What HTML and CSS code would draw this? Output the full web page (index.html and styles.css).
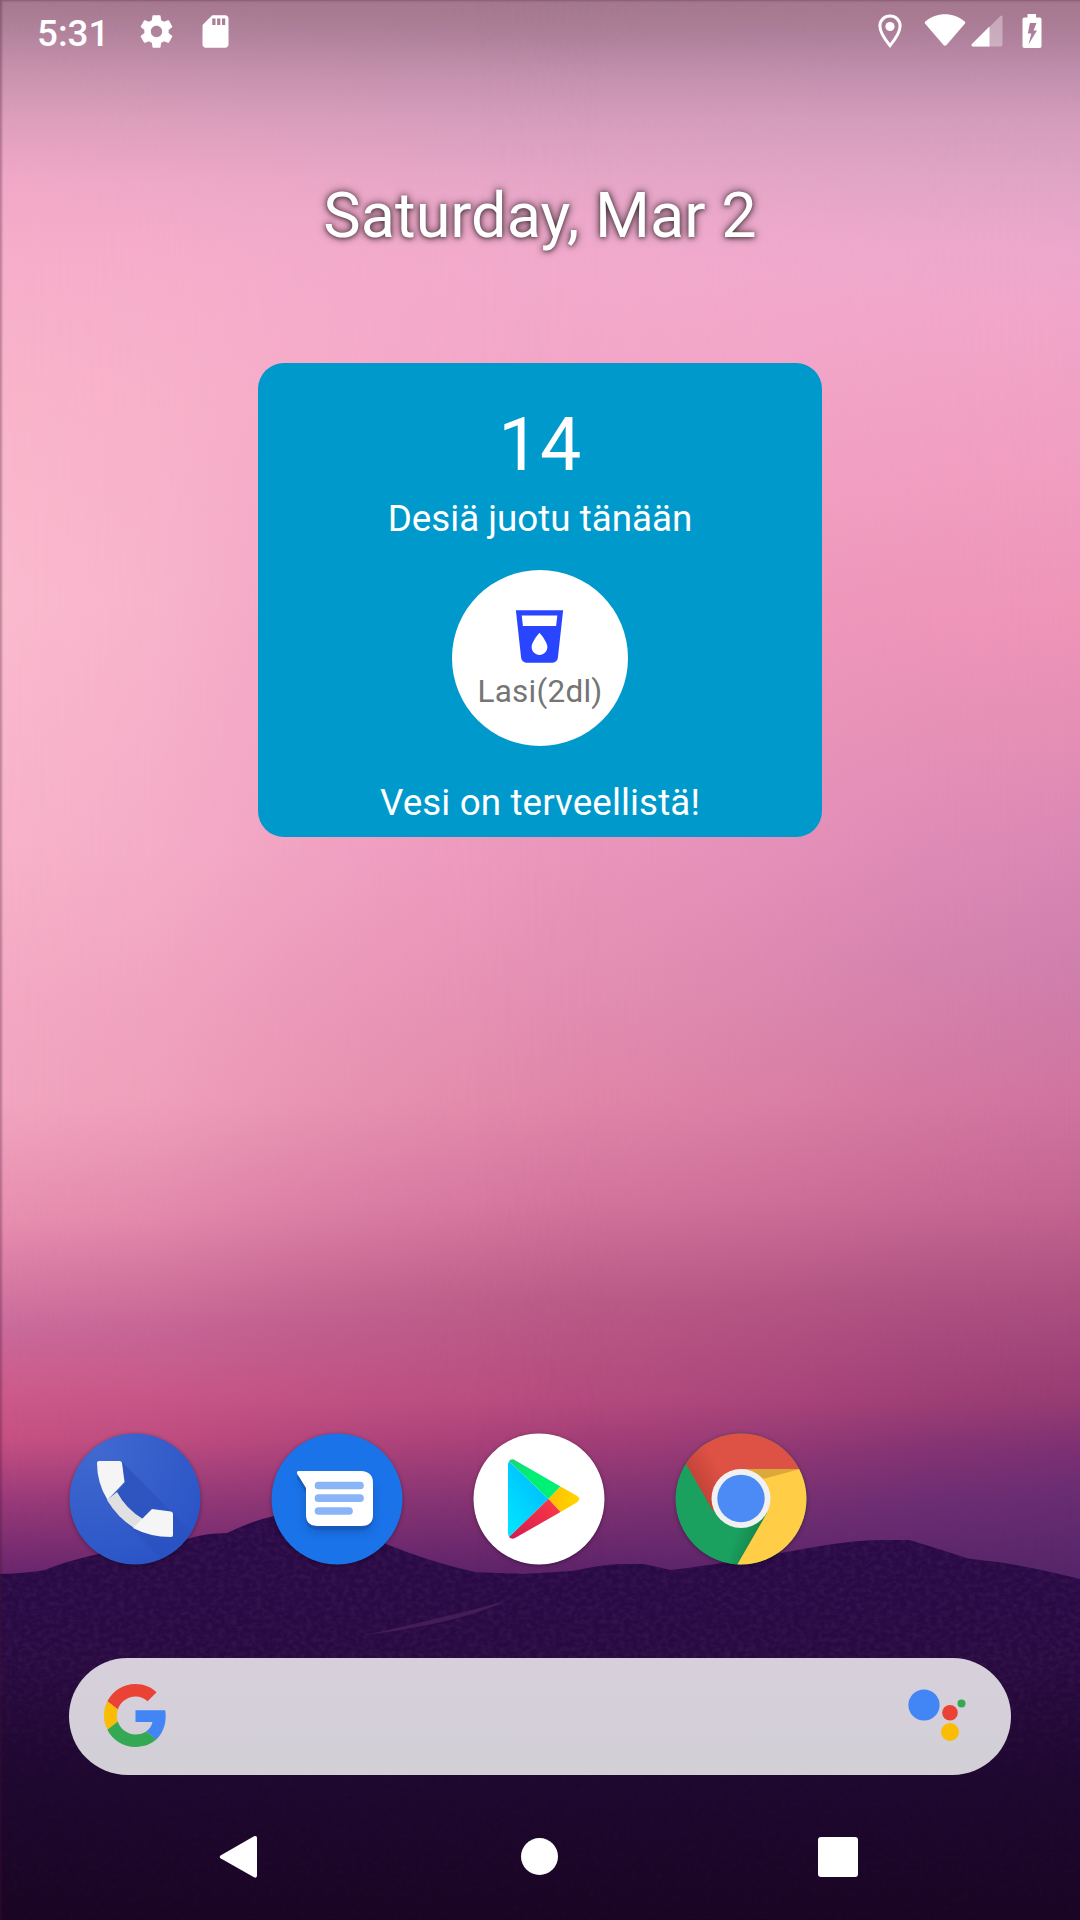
FILE: index.html
```html
<!DOCTYPE html>
<html lang="fi">
<head>
<meta charset="utf-8">
<title>Home screen</title>
<link rel="stylesheet" href="styles.css">
</head>
<body>
<div class="phone">
  <div class="wallpaper">
    <div class="sky sky-mid"></div>
    <div class="sky sky-left"></div>
    <div class="sky sky-right"></div>
    <svg class="hills" viewBox="0 0 1080 400" width="1080" height="400">
      <defs>
        <linearGradient id="ground" x1="0" y1="0" x2="0" y2="1">
          <stop offset="0" stop-color="#2a0a47"/><stop offset=".35" stop-color="#280a41"/>
          <stop offset=".65" stop-color="#1e082f"/><stop offset="1" stop-color="#1a0524"/>
        </linearGradient>
        <filter id="grain" x="0" y="0" width="100%" height="100%">
          <feTurbulence type="fractalNoise" baseFrequency=".16 .22" numOctaves="3" seed="4"/>
          <feColorMatrix values="0 0 0 0 .28  0 0 0 0 .1  0 0 0 0 .32  1.4 0 0 0 -.5"/>
          <feComposite in2="SourceGraphic" operator="in"/>
        </filter>
        <linearGradient id="fade" x1="0" y1="0" x2="0" y2="1">
          <stop offset="0" stop-color="#fff" stop-opacity=".2"/><stop offset=".4" stop-color="#fff" stop-opacity=".18"/><stop offset=".65" stop-color="#fff" stop-opacity=".04"/>
        </linearGradient>
        <mask id="grainmask"><rect y="-20" width="1080" height="420" fill="url(#fade)"/></mask>
        <path id="ridge" d="M0 54 Q28 53 45 50 Q60 43 98 34 L187 19 Q205 13 227 13 Q252 1 274 -4 Q330 -14 386 24 Q430 42 475 52 Q500 53 523 54 L572 51 Q600 45 620 44 H644 Q662 48 671 50 Q720 44 792 31 Q850 20 880 20 L909 20 Q930 26 968 38.500 L1005 43 Q1045 50 1080 59 V400 H0Z"/>
      </defs>
      <use href="#ridge" fill="url(#ground)"/>
      <g mask="url(#grainmask)"><use href="#ridge" filter="url(#grain)"/></g>
      <path d="M366 115 Q450 96 506 81 Q460 103 366 115Z" fill="#482058" opacity=".85"/>
    </svg>
    <div class="edge"></div>
  </div>

  <header class="status">
    <span class="clock">5:31</span>
    <svg class="gear" width="39" height="39" viewBox="0 0 24 24"><path d="M19.43 12.98c.04-.32.07-.64.07-.98s-.03-.66-.07-.98l2.11-1.65c.19-.15.24-.42.12-.64l-2-3.46c-.12-.22-.39-.3-.61-.22l-2.49 1c-.52-.4-1.08-.73-1.69-.98l-.38-2.65C14.46 2.18 14.25 2 14 2h-4c-.25 0-.46.18-.49.42l-.38 2.65c-.61.25-1.17.59-1.69.98l-2.49-1c-.23-.09-.49 0-.61.22l-2 3.46c-.13.22-.07.49.12.64l2.11 1.65c-.04.32-.07.65-.07.98s.03.66.07.98l-2.11 1.65c-.19.15-.24.42-.12.64l2 3.46c.12.22.39.3.61.22l2.49-1c.52.4 1.08.73 1.69.98l.38 2.65c.03.24.24.42.49.42h4c.25 0 .46-.18.49-.42l.38-2.65c.61-.25 1.17-.59 1.69-.98l2.49 1c.23.09.49 0 .61-.22l2-3.46c.12-.22.07-.49-.12-.64l-2.11-1.65zM12 15.5c-1.93 0-3.5-1.57-3.5-3.5s1.57-3.5 3.5-3.5 3.5 1.57 3.5 3.5-1.57 3.5-3.5 3.5z"/></svg>
    <svg class="sd" width="39" height="39" viewBox="0 0 24 24"><path d="M18 2h-8L4.02 8 4 20c0 1.100.9 2 2 2h12c1.100 0 2-.9 2-2V4c0-1.100-.9-2-2-2zm-6 6h-2V4h2v4zm3 0h-2V4h2v4zm3 0h-2V4h2v4z"/></svg>
    <span class="spacer"></span>
    <svg class="pin" width="24" height="35" viewBox="0 0 24 35"><path d="M12 2C6.300 2 1.900 6.300 1.900 12c0 6.800 6 14.600 10.100 19.600C16.100 26.600 22.100 18.800 22.100 12 22.100 6.300 17.700 2 12 2z" fill="none" stroke="#fff" stroke-width="3"/><circle cx="12" cy="12.500" r="4.600"/></svg>
    <svg class="wifi" width="42" height="33" viewBox="0 0 42 33"><path d="M1.200 9.700Q0 8.500 1.400 7.400C13-2 29-2 40.600 7.400Q42 8.500 40.800 9.700L22.500 31Q21 32.500 19.500 31Z"/></svg>
    <svg class="cell" width="32" height="32" viewBox="0 0 32 32"><path d="M29 1.500Q31.500-.5 31.500 2V29.500Q31.500 31.500 29.500 31.500H2Q-.5 31 1 29Z" opacity=".35"/><path d="M18.500 11.500V31.500H2Q-.5 31 1 29Z"/></svg>
    <svg class="battery" width="20" height="34" viewBox="0 0 20 34"><path fill-rule="evenodd" d="M5.500 0h8.500v3.500h3.700Q19.500 3.500 19.500 5.300V32Q19.500 34 17.700 34H2.300Q.5 34 .5 32V5.300Q.5 3.500 2.300 3.500H5.500ZM8 9L5.800 19.500H9.300L6.500 30.500L15 16.500H11.500L14.500 9Z"/></svg>
  </header>

  <div class="date">Saturday, Mar 2</div>

  <section class="widget">
    <div class="count">14</div>
    <div class="label">Desiä juotu tänään</div>
    <div class="glass">
      <svg width="63" height="63" viewBox="0 0 24 24"><path d="M3 2l2.010 18.230C5.130 21.230 5.970 22 7 22h10c1.030 0 1.870-.77 1.990-1.770L21 2H3zm9 17c-1.660 0-3-1.340-3-3 0-2 3-5.400 3-5.400s3 3.400 3 5.400c0 1.660-1.340 3-3 3zm6.330-11H5.670l-.44-4h13.550l-.45 4z"/></svg>
      <span>Lasi(2dl)</span>
    </div>
    <div class="tip">Vesi on terveellistä!</div>
  </section>

  <nav class="dock">
    <svg class="app" width="132" height="132" viewBox="0 0 132 132">
      <defs>
        <radialGradient id="ph" cx=".2" cy=".1" r="1"><stop offset="0" stop-color="#4169d0"/><stop offset="1" stop-color="#2a54c6"/></radialGradient>
        <clipPath id="disc"><circle cx="66" cy="66" r="65.500"/></clipPath>
        <linearGradient id="ls" x1="0" y1="0" x2="1" y2="1"><stop offset="0" stop-color="#2448b4" stop-opacity=".6"/><stop offset="1" stop-color="#2448b4" stop-opacity=".08"/></linearGradient>
      </defs>
      <circle cx="66" cy="66" r="65.500" fill="url(#ph)"/>
      <path clip-path="url(#disc)" d="M53 29L132 108V132H98L40 72L48 59L56 50Z" fill="url(#ls)"/>
      <path d="M38 67L48 59Q57 76 74 86L65 95Q48 84 38 67Z" fill="#e0e0e0"/>
      <path d="M30 28H50.500Q52.500 28 53 30L55.500 49L47.500 57.500L38.500 67Q28 50 28 30Q28 28 30 28Z" fill="#f5f5f5"/>
      <path d="M64 95L83 76L102 78.500Q104 79 104 81V102Q104 104 102 104Q81 104 64 95Z" fill="#f5f5f5"/>
    </svg>
    <svg class="app" width="132" height="132" viewBox="0 0 132 132">
      <defs><filter id="ms" x="-20%" y="-20%" width="150%" height="150%"><feGaussianBlur stdDeviation="4"/></filter></defs>
      <circle cx="66" cy="66" r="65.500" fill="#1a73e8"/>
      <path d="M28 46H90Q102 48 102 62V87Q100 99 90 99H46Q35 97 35 85V58Z" fill="#174ea6" opacity=".55" filter="url(#ms)"/>
      <path d="M26 43V45L35 60V86Q36 97 47 97H90Q101 96 102 86V50Z" fill="#185abc"/>
      <path d="M27.500 38H90Q102 38.500 102 50V82Q102 93 90 93H46Q35 92.500 35 82V55L26 40.500Q25.500 38 27.500 38Z" fill="#fff"/>
      <path d="M47.500 52.500H89M47.500 65.200H89M47.500 78H78" stroke="#8ab4f8" stroke-width="7.700" stroke-linecap="round"/>
    </svg>
    <svg class="app" width="132" height="132" viewBox="0 0 132 132">
      <defs>
        <linearGradient id="pb" x1="1" y1="0" x2=".3" y2="1"><stop offset="0" stop-color="#00b4ff"/><stop offset="1" stop-color="#00e2ff"/></linearGradient>
        <linearGradient id="py" x1="1" y1="0" x2="0" y2="0"><stop offset="0" stop-color="#ffd600"/><stop offset="1" stop-color="#ffbe00"/></linearGradient>
        <linearGradient id="pr" x1="1" y1="0" x2="0" y2="1"><stop offset="0" stop-color="#ff3a44"/><stop offset="1" stop-color="#d01c54"/></linearGradient>
        <linearGradient id="pg" x1="0" y1="0" x2="1" y2="1"><stop offset="0" stop-color="#21d07a"/><stop offset=".4" stop-color="#00f076"/></linearGradient>
      </defs>
      <circle cx="66" cy="66" r="65.500" fill="#fff"/>
      <path d="M36 28L75.500 66L36 104Q35 102 35 99V31Z" fill="url(#pb)"/>
      <path d="M36 28Q38.500 25 42.500 27.500L87.500 53.500L75.500 66Z" fill="url(#pg)"/>
      <path d="M87.500 53.500L103 62.300Q109.500 66 103 70L87.500 79L75.500 66Z" fill="url(#py)"/>
      <path d="M75.500 66L87.500 79L42.500 104.800Q38.500 107 36 104Z" fill="url(#pr)"/>
    </svg>
    <svg class="app" width="132" height="132" viewBox="0 0 132 132">
      <defs>
        <linearGradient id="cr" gradientUnits="userSpaceOnUse" x1="14" y1="58" x2="46" y2="38"><stop offset="0" stop-color="#b93f33"/><stop offset="1" stop-color="#de5145"/></linearGradient>
        <linearGradient id="cg" gradientUnits="userSpaceOnUse" x1="82" y1="112" x2="60" y2="104"><stop offset="0" stop-color="#178349"/><stop offset="1" stop-color="#1aa15f"/></linearGradient>
      </defs>
      <g clip-path="url(#disc)">
        <rect width="132" height="132" fill="#1aa15f"/>
        <path d="M11 31L38 78L66 66L124 36V0H0Z" fill="url(#cr)"/>
        <path d="M88 84L63 132H66L90 90Z" fill="#178349"/>
        <path d="M88 88L60 98L54 132H63Z" fill="url(#cg)"/>
        <path d="M66 36H132V132H62L92 80Z" fill="#ffcd46"/>
        <path d="M66 36H125L88 46Z" fill="#dba93a"/>
      </g>
      <circle cx="66" cy="65.500" r="29.500" fill="#f1f1f1"/>
      <circle cx="66" cy="65.500" r="23.700" fill="#4c8bf5"/>
    </svg>
  </nav>

  <div class="search">
    <svg width="63" height="63" viewBox="0 0 48 48">
      <path fill="#ea4335" d="M24 9.500c3.540 0 6.710 1.220 9.210 3.600l6.850-6.850C35.900 2.380 30.470 0 24 0 14.620 0 6.510 5.380 2.560 13.220l7.980 6.190C12.430 13.720 17.740 9.500 24 9.500z"/>
      <path fill="#4285f4" d="M46.980 24.550c0-1.570-.15-3.090-.38-4.550H24v9.020h12.940c-.58 2.960-2.260 5.480-4.780 7.180l7.730 6c4.510-4.180 7.090-10.360 7.090-17.650z"/>
      <path fill="#fbbc05" d="M10.530 28.590c-.48-1.450-.76-2.990-.76-4.590s.27-3.140.76-4.590l-7.980-6.190C.92 16.460 0 20.120 0 24c0 3.880.92 7.540 2.560 10.780l7.970-6.190z"/>
      <path fill="#34a853" d="M24 48c6.480 0 11.930-2.130 15.890-5.810l-7.730-6c-2.150 1.450-4.920 2.300-8.160 2.300-6.260 0-11.570-4.220-13.470-9.910l-7.980 6.190C6.510 42.620 14.620 48 24 48z"/>
    </svg>
    <svg width="58" height="53" viewBox="0 0 58 53">
      <circle cx="16" cy="16" r="15.600" fill="#4285f4"/><circle cx="42" cy="23.700" r="7.800" fill="#ea4335"/>
      <circle cx="42" cy="43" r="9" fill="#fbbc05"/><circle cx="53.500" cy="14.600" r="4" fill="#34a853"/>
    </svg>
  </div>

  <footer class="navbar">
    <svg width="40" height="44" viewBox="0 0 40 44"><path d="M1.500 20.500L35 1.300Q38 0 38 3V40.500Q38 43.500 35 42.300L1.500 23.300Q0 22 1.500 20.500Z"/></svg>
    <svg width="38" height="38" viewBox="0 0 38 38"><circle cx="19.500" cy="18.500" r="18.500"/></svg>
    <svg width="40" height="40" viewBox="0 0 40 40"><rect width="40" height="40" rx="3"/></svg>
  </footer>
</div>
</body>
</html>
```
FILE: styles.css
```css
* { box-sizing: border-box; }
body { margin: 0; font-family: Roboto, sans-serif; color: #fff; }
svg { display: block; flex: none; }

.phone {
  position: relative;
  width: 1080px;
  height: 1920px;
  overflow: hidden;
  display: flex;
  flex-direction: column;
}

.wallpaper { position: absolute; inset: 0; z-index: -1; }
.sky { position: absolute; inset: 0; }
.sky-mid {
  background: linear-gradient(#a4788c 0, #ac7e98 30px, #c391ae 75px, #d79dbd 120px, #e5a6c7 175px, #f0aacc 230px, #f3aacd 270px, #f3a6c7 400px, #ee9abf 600px, #ec97bd 850px, #e58fb2 1000px, #e288a9 1100px, #d5769f 1200px, #bb5c88 1300px, #b84c7f 1400px, #a74078 1440px, #833373 1500px, #5f246a 1570px);
}
.sky-left {
  background: linear-gradient(#a4788c 0, #b1829c 30px, #c993ae 75px, #dd9fbc 120px, #f0a8c6 180px, #f6adc9 250px, #f9b4ca 400px, #fabace 600px, #f7b2c9 850px, #f3a8c2 1000px, #f1a5bf 1100px, #e78eae 1220px, #c9699a 1330px, #cc5b8b 1390px, #c55082 1440px, #993a79 1500px, #6c276d 1570px);
  mask-image: linear-gradient(90deg, #000, rgba(0, 0, 0, .8) 14%, rgba(0, 0, 0, .46) 27%, rgba(0, 0, 0, .17) 41%, transparent 56%);
}
.sky-right {
  background: linear-gradient(#a4788c 0, #ac7e98 30px, #c08fae 75px, #d49cbb 120px, #e0a4c5 180px, #eca8cc 250px, #f1a5c9 320px, #f09fc1 450px, #ee94b7 620px, #e48eb5 740px, #d987b4 850px, #cf7fac 970px, #d0739f 1100px, #c36591 1200px, #ab4e7f 1300px, #963b73 1400px, #7b3072 1450px, #672c72 1500px, #57266a 1570px);
  mask-image: linear-gradient(270deg, #000, rgba(0, 0, 0, .78) 14%, rgba(0, 0, 0, .46) 27%, rgba(0, 0, 0, .17) 41%, transparent 56%);
}
.hills { position: absolute; left: 0; top: 1520px; overflow: visible; }
.edge { position: absolute; inset: 0; box-shadow: inset 2px 1px 2px rgba(70, 20, 50, .3); }

.status {
  height: 63px;
  padding: 0 38px 0 37px;
  display: flex;
  align-items: flex-start;
  fill: #fff;
}
.clock { font-size: 36.75px; font-weight: 500; line-height: 43px; padding-top: 12px; width: 100px; }
.gear { margin-top: 12px; }
.sd { margin: 12px 0 0 19.5px; }
.spacer { flex: 1; }
.pin { margin: 14px 22px 0 0; }
.wifi { margin: 14px 5px 0 0; }
.cell { margin: 15px 19px 0 0; }
.battery { margin-top: 14px; }

.date {
  margin-top: 116px;
  text-align: center;
  font-size: 63px;
  line-height: 74px;
  text-shadow: 0 0 8px rgba(0, 0, 0, .75), 0 1px 4px rgba(0, 0, 0, .45);
}

.widget {
  margin: 110px auto 0;
  width: 564px;
  height: 474px;
  padding-top: 38px;
  border-radius: 26px;
  background: #09c;
  display: flex;
  flex-direction: column;
  align-items: center;
}
.count { font-size: 73.5px; line-height: 88px; letter-spacing: .5px; }
.label { font-size: 36.75px; line-height: 43px; margin-top: 8px; }
.glass {
  width: 176px;
  height: 176px;
  margin-top: 30px;
  padding-top: 35px;
  border-radius: 50%;
  background: #fff;
  display: flex;
  flex-direction: column;
  align-items: center;
  fill: #2a45ff;
  color: #757575;
  font-size: 31.5px;
  line-height: 37px;
}
.glass svg { margin-right: 2px; }
.glass span { margin-top: 5px; letter-spacing: .25px; }
.tip { font-size: 36.75px; line-height: 43px; margin-top: 35px; letter-spacing: .12px; }

.dock { display: flex; gap: 70px; padding-left: 69px; margin-top: 596px; }
.app { border-radius: 50%; filter: drop-shadow(0 1px 2px rgba(0, 0, 0, .35)); }

.search {
  margin: 93px auto 0;
  width: 942px;
  height: 117px;
  padding: 0 45px 2px 35px;
  border-radius: 59px;
  background: linear-gradient(#d7d0dc, #d2cfd6);
  display: flex;
  align-items: center;
  justify-content: space-between;
}

.navbar {
  margin-top: 60px;
  padding: 0 222px 0 219px;
  display: flex;
  align-items: center;
  justify-content: space-between;
  fill: #fff;
}
```
